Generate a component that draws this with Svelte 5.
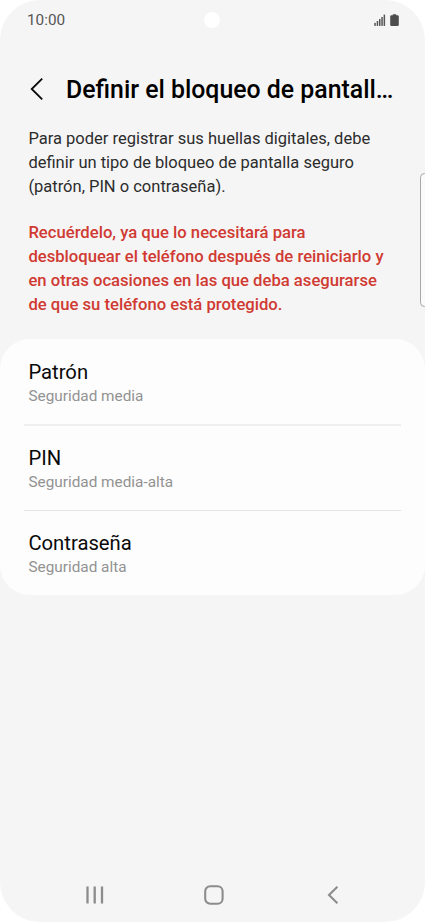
<script>
    const lockTypes = [
        { name: 'Patrón', security: 'Seguridad media' },
        { name: 'PIN', security: 'Seguridad media-alta' },
        { name: 'Contraseña', security: 'Seguridad alta' }
    ];
</script>

<div class="phone">
    <div class="status-bar">
        <span class="time">10:00</span>
        <span class="camera"></span>
        <svg class="status-icons" width="26" height="14" viewBox="0 0 26 14">
            <g fill="#555">
                <rect x="0.3" y="9.9" width="1.5" height="3" />
                <rect x="2.7" y="8" width="1.5" height="4.9" />
                <rect x="5" y="6" width="1.5" height="6.9" />
                <rect x="7.3" y="4" width="1.5" height="8.9" />
                <rect x="9.6" y="1.6" width="1.5" height="11.3" />
            </g>
            <path d="M18.8 1.2h3.4v1h1.3a1.3 1.3 0 0 1 1.3 1.3v8.2a1.4 1.4 0 0 1-1.4 1.4h-5.8a1.4 1.4 0 0 1-1.4-1.4V3.5a1.3 1.3 0 0 1 1.3-1.3h1.3z" fill="#4d4d4d" />
        </svg>
    </div>

    <header>
        <svg class="back" width="14" height="24" viewBox="0 0 14 24">
            <path d="M12.2 1.7L1.7 12l10.5 10.3" fill="none" stroke="#0a0a0a" stroke-width="1.8" />
        </svg>
        <h1>Definir el bloqueo de pantall…</h1>
    </header>

    <p class="intro">
        Para poder registrar sus huellas digitales, debe<br />
        definir un tipo de bloqueo de pantalla seguro<br />
        (patrón, PIN o contraseña).
    </p>
    <p class="warning">
        Recuérdelo, ya que lo necesitará para<br />
        desbloquear el teléfono después de reiniciarlo y<br />
        en otras ocasiones en las que deba asegurarse<br />
        de que su teléfono está protegido.
    </p>

    <ul>
        {#each lockTypes as type}
            <li>
                <span class="name">{type.name}</span>
                <span class="security">{type.security}</span>
            </li>
        {/each}
    </ul>

    <nav>
        <svg width="20" height="20" viewBox="0 0 20 20">
            <path d="M2.5 1.4v17.2M9.7 1.4v17.2M17 1.4v17.2" stroke="#8c8c8c" stroke-width="2.3" />
        </svg>
        <svg width="20" height="20" viewBox="0 0 20 20">
            <rect x="1.2" y="1.2" width="17.4" height="17.6" rx="5" fill="none" stroke="#8c8c8c" stroke-width="2.1" />
        </svg>
        <svg width="20" height="20" viewBox="0 0 20 20">
            <path d="M14.4 1.7L6 10l8.4 8.3" fill="none" stroke="#8c8c8c" stroke-width="2.1" />
        </svg>
    </nav>

    <div class="edge-panel"></div>
</div>

<style>
    :global(body) {
        margin: 0;
        background: #fff;
    }

    .phone {
        position: relative;
        display: flex;
        flex-direction: column;
        box-sizing: border-box;
        width: 425px;
        height: 922px;
        overflow: hidden;
        background: #f5f5f5;
        border-radius: 40px;
        font-family: Roboto, sans-serif;
    }

    .status-bar {
        display: grid;
        grid-template-columns: 177px 16px 1fr;
        align-items: center;
        height: 40px;
        padding: 0 25px 0 27px;
    }

    .time {
        font-size: 15.3px;
        color: #555;
    }

    .camera {
        width: 16px;
        height: 16px;
        border-radius: 50%;
        background: #fff;
    }

    .status-icons {
        justify-self: end;
    }

    header {
        display: flex;
        align-items: center;
        height: 50px;
        margin-top: 24px;
        padding-left: 30px;
    }

    h1 {
        margin: 2px 0 0 22px;
        font-size: 24.85px;
        font-weight: 500;
        line-height: 50px;
        white-space: nowrap;
        color: #000;
    }

    p {
        margin: 0;
        padding-left: 28.4px;
        font-size: 16.5px;
        line-height: 24px;
        white-space: nowrap;
    }

    .intro {
        margin-top: 13px;
        color: #2c2c2c;
    }

    .warning {
        margin-top: 22px;
        font-size: 16.65px;
        font-weight: 500;
        color: #d03a32;
    }

    ul {
        height: 256px;
        margin: 22px 0 0;
        padding: 0 24px;
        list-style: none;
        background: #fdfdfd;
        border-radius: 30px;
    }

    li {
        display: flex;
        flex-direction: column;
        box-sizing: border-box;
        height: 85px;
        padding: 19px 4.4px 0;
        border-bottom: 1px solid #e4e4e4;
    }

    li:first-child {
        height: 87px;
        padding-top: 20px;
        border-bottom: 2px solid #efefef;
    }

    li:last-child {
        border-bottom: 0;
    }

    .name {
        font-size: 20.25px;
        line-height: 26px;
        color: #0a0a0a;
    }

    .security {
        font-size: 15.35px;
        line-height: 22px;
        color: #929292;
    }

    nav {
        display: flex;
        justify-content: space-between;
        margin-top: auto;
        padding: 0 82px 17px 85px;
    }

    .edge-panel {
        position: absolute;
        top: 173px;
        right: -4px;
        width: 7px;
        height: 132px;
        border: 1px solid #a8a8a8;
        border-radius: 5px;
        background: #fafafa;
    }
</style>
